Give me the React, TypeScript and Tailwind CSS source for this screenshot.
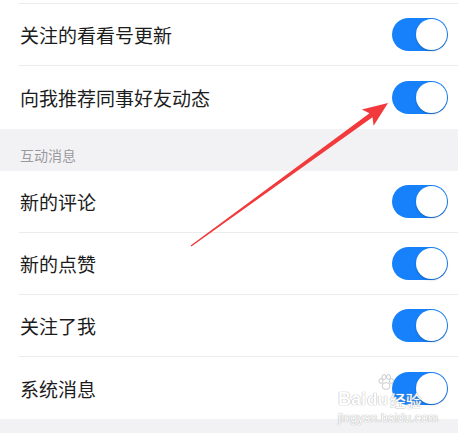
import React from "react";

const font = { fontFamily: '"Noto Sans CJK SC", "Noto Sans", sans-serif' };
const latin = { fontFamily: '"Liberation Sans", sans-serif' };

interface RowProps {
    label: string;
    last?: boolean;
    tall?: boolean;
}

// iOS style switch, always on in this screen
const Toggle: React.FC = () => (
    <div className="flex h-[33px] w-[56px] items-center justify-end rounded-full bg-[#1681fb] p-[1px]">
        <div className="h-[31px] w-[31px] rounded-full bg-white shadow-[0_1px_2px_rgba(0,0,0,0.25)]" />
    </div>
);

const Row: React.FC<RowProps> = ({ label, last = false, tall = false }) => (
    <div className="bg-white pl-[19px]">
        <div
            className={`flex items-center justify-between pr-[10px] ${tall ? "h-[63px]" : "h-[62px]"} ${last ? "" : "border-b border-[#ececee]"}`}
        >
            <span className="pl-[1px] text-[19px] leading-none text-[#1c1c1c]">{label}</span>
            <Toggle />
        </div>
    </div>
);

const Watermark: React.FC = () => (
    <div className="pointer-events-none absolute left-[338px] top-[374px] flex w-[90px] flex-col text-white [text-shadow:0_0_1px_#b0b0b0,0_0_1px_#b0b0b0]">
        <svg className="ml-[40px]" width="16" height="16" viewBox="0 0 16 16">
            <g fill="#fff" stroke="#bdbdbd" strokeWidth="0.8">
                <ellipse cx="3" cy="7" rx="2" ry="2.4" />
                <ellipse cx="6" cy="3" rx="2" ry="2.4" />
                <ellipse cx="10.5" cy="3" rx="2" ry="2.4" />
                <ellipse cx="13.5" cy="7" rx="2" ry="2.4" />
                <ellipse cx="8.2" cy="12" rx="4" ry="3.4" />
            </g>
        </svg>
        <div className="flex items-end font-bold leading-none" style={latin}>
            <span className="text-[18px]">Bai</span>
            <span className="ml-[1px] text-[17px]">du</span>
            <span className="ml-[2px] text-[16px] font-normal" style={font}>经验</span>
        </div>
        <span className="mt-[4px] text-[12px] leading-none tracking-[0.2px]" style={latin}>
            jingyan.baidu.com
        </span>
    </div>
);

const Arrow: React.FC = () => (
    <svg className="pointer-events-none absolute left-0 top-0" width="458" height="433" viewBox="0 0 458 433">
        <polygon
            points="388,103 373.6,125.8 372.5,117.3 191.4,246.5 190.6,245.5 369.5,113.3 361.8,109.6"
            fill="#f2393b"
        />
    </svg>
);

export default function App() {
    return (
        <div className="relative h-[433px] w-[458px] overflow-hidden bg-[#f2f2f4]" style={font}>
            <div className="h-[3px] bg-white" />
            <div className="bg-white pl-[19px]">
                <div className="h-[1px] bg-[#ececee]" />
            </div>
            <Row label="关注的看看号更新" />
            <Row label="向我推荐同事好友动态" last tall />

            <div className="flex h-[42px] items-center pl-[20px] pt-[9px] text-[14px] leading-none text-[#9a9a9e]">
                互动消息
            </div>

            <Row label="新的评论" />
            <Row label="新的点赞" />
            <Row label="关注了我" />
            <Row label="系统消息" last />

            <Watermark />
            <Arrow />
        </div>
    );
}
